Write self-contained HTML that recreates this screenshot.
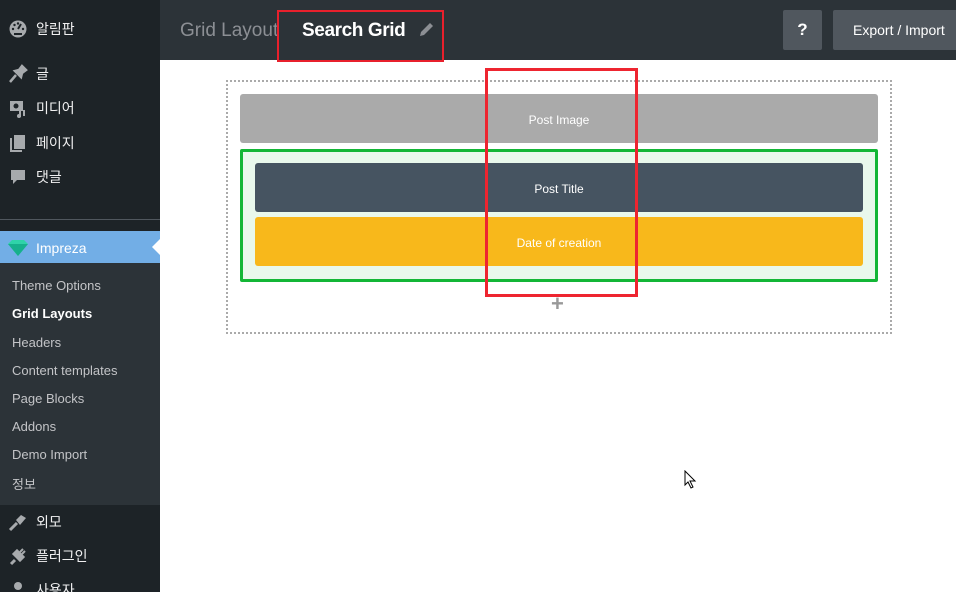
<!DOCTYPE html>
<html><head><meta charset="utf-8"><style>
*{margin:0;padding:0;box-sizing:border-box}
html,body{width:956px;height:592px;overflow:hidden}
body{background:#fff;font-family:"Liberation Sans","Noto Sans CJK KR",sans-serif;position:relative}
.sb{position:absolute;left:0;top:0;width:160px;height:592px;background:#1d2327}
.mi{position:absolute;left:0;width:160px;height:34px;color:#f0f0f1;font-size:14px;display:flex;align-items:center;padding-top:1px}
.mi .ic{width:36px;display:flex;justify-content:center;margin-right:0}
.sub{position:absolute;left:0;top:263px;width:160px;height:242px;background:#2c3338}
.sub div{position:absolute;left:12px;font-size:13px;color:#c3c4c7}
.top{position:absolute;left:160px;top:0;width:796px;height:60px;background:#2c3338}
.abs{position:absolute}
.blk{position:absolute;border-radius:3px;color:#fff;font-size:12px;display:flex;align-items:center;justify-content:center;padding-top:2px}
</style></head><body>
<div class="sb">
 <div class="mi" style="top:11px"><div class="ic"><svg width="20" height="20" viewBox="0 0 20 20"><circle cx="10" cy="10" r="8.5" fill="#a7aaad"/><path d="M10 10 L13 5" stroke="#1d2327" stroke-width="2"/><circle cx="5" cy="10" r="1.2" fill="#1d2327"/><circle cx="6.5" cy="6" r="1.2" fill="#1d2327"/><circle cx="10" cy="4.5" r="1.2" fill="#1d2327"/><circle cx="15" cy="10" r="1.2" fill="#1d2327"/><rect x="6" y="14" width="8" height="2" fill="#1d2327"/></svg></div><span>알림판</span></div>
 <div class="mi" style="top:56px"><div class="ic"><svg width="20" height="20" viewBox="0 0 20 20"><path d="M2 18 L8 11 M7 7 L13 13 L14 9 L18 6 L14 2 L11 6 Z" stroke="#a7aaad" stroke-width="2.5" fill="#a7aaad"/></svg></div><span>글</span></div>
 <div class="mi" style="top:90px"><div class="ic"><svg width="20" height="20" viewBox="0 0 20 20"><rect x="2" y="3" width="13" height="10" fill="#a7aaad"/><circle cx="8" cy="8" r="2.5" fill="#1d2327"/><path d="M12 13 v6 M16 12 v6" stroke="#a7aaad" stroke-width="2"/><circle cx="11" cy="18" r="2" fill="#a7aaad"/></svg></div><span>미디어</span></div>
 <div class="mi" style="top:125px"><div class="ic"><svg width="20" height="20" viewBox="0 0 20 20"><rect x="6" y="2" width="11" height="14" fill="#a7aaad"/><path d="M3 5 v13 h11" stroke="#a7aaad" stroke-width="2" fill="none"/></svg></div><span>페이지</span></div>
 <div class="mi" style="top:159px"><div class="ic"><svg width="20" height="20" viewBox="0 0 20 20"><path d="M3 3 h14 v10 h-8 l-4 4 v-4 h-2z" fill="#a7aaad"/></svg></div><span>댓글</span></div>
 <div class="abs" style="left:0;top:219px;width:160px;height:1px;background:#50575e"></div>
 <div class="mi" style="top:231px;height:33px;background:#72aee6;color:#fff"><div class="ic"><svg width="24" height="18" viewBox="0 0 24 18"><path d="M2 5 L6 1 H18 L22 5 L12 17 Z" fill="#2fd3a9"/><path d="M2 5 H22 L12 17Z" fill="#16b08c"/></svg></div><span>Impreza</span>
 <div class="abs" style="right:0;top:8px;width:0;height:0;border-top:8px solid transparent;border-bottom:8px solid transparent;border-right:8px solid #fff"></div></div>
 <div class="sub">
  <div style="top:15px">Theme Options</div>
  <div style="top:43px;color:#fff;font-weight:bold">Grid Layouts</div>
  <div style="top:72px">Headers</div>
  <div style="top:100px">Content templates</div>
  <div style="top:128px">Page Blocks</div>
  <div style="top:156px">Addons</div>
  <div style="top:184px">Demo Import</div>
  <div style="top:211px">정보</div>
 </div>
 <div class="mi" style="top:504px"><div class="ic"><svg width="20" height="20" viewBox="0 0 20 20"><path d="M2 18 L9 11" stroke="#a7aaad" stroke-width="3"/><path d="M8 8 L13 3 L18 6 L12 13 Z" fill="#a7aaad"/></svg></div><span>외모</span></div>
 <div class="mi" style="top:538px"><div class="ic"><svg width="20" height="20" viewBox="0 0 20 20"><path d="M3 18 L7 14 M6 8 L12 14 L15 11 L9 5Z" stroke="#a7aaad" stroke-width="3" fill="#a7aaad"/><path d="M12 6 L15 3 M14 8 L17 5" stroke="#a7aaad" stroke-width="2"/></svg></div><span>플러그인</span></div>
 <div class="mi" style="top:572px"><div class="ic"><svg width="20" height="20" viewBox="0 0 20 20"><circle cx="10" cy="6" r="4" fill="#a7aaad"/><path d="M3 18 q7-10 14 0z" fill="#a7aaad"/></svg></div><span>사용자</span></div>
</div>
<div class="top">
 <div class="abs" style="left:20px;top:20px;font-size:19px;color:#8c8f94">Grid Layout</div>
 <div class="abs" style="left:142px;top:20px;font-size:19px;color:#fff;font-weight:bold;letter-spacing:-0.4px">Search Grid</div>
 <svg class="abs" style="left:258px;top:22px" width="16" height="16" viewBox="0 0 16 16"><path d="M2 14 L3 10 L12 1 L15 4 L6 13 Z" fill="#8c8f94"/></svg>
 <div class="abs" style="left:623px;top:10px;width:39px;height:40px;background:#50575e;border-radius:2px;color:#fff;font-weight:bold;font-size:17px;text-align:center;line-height:40px">?</div>
 <div class="abs" style="left:673px;top:10px;width:130px;height:40px;background:#50575e;border-radius:2px;color:#fff;font-size:14px;line-height:41px;padding-left:20px">Export / Import</div>
</div>
<div class="abs" style="left:277px;top:10px;width:167px;height:52px;border:2px solid #e8202c"></div>
<div class="abs" style="left:226px;top:80px;width:666px;height:254px;border:2px dotted #aaa"></div>
<div class="blk" style="left:240px;top:94px;width:638px;height:49px;background:#aaa">Post Image</div>
<div class="abs" style="left:240px;top:149px;width:638px;height:133px;border:3px solid #13b636;background:#e9f8ec;border-radius:2px"></div>
<div class="blk" style="left:255px;top:163px;width:608px;height:49px;background:#465461">Post Title</div>
<div class="blk" style="left:255px;top:217px;width:608px;height:49px;background:#f8b81b">Date of creation</div>
<div class="abs" style="left:485px;top:68px;width:153px;height:229px;border:3px solid #ee2530"></div>
<div class="abs" style="left:551px;top:295px;font-size:22px;color:#999;font-weight:bold;line-height:18px">+</div>
<svg class="abs" style="left:684px;top:470px" width="14" height="20" viewBox="0 0 14 20"><path d="M1 1 L1 15 L4 12 L7 18 L9 17 L6 11 L11 11 Z" fill="#fff" stroke="#000" stroke-width="1"/></svg>
</body></html>
